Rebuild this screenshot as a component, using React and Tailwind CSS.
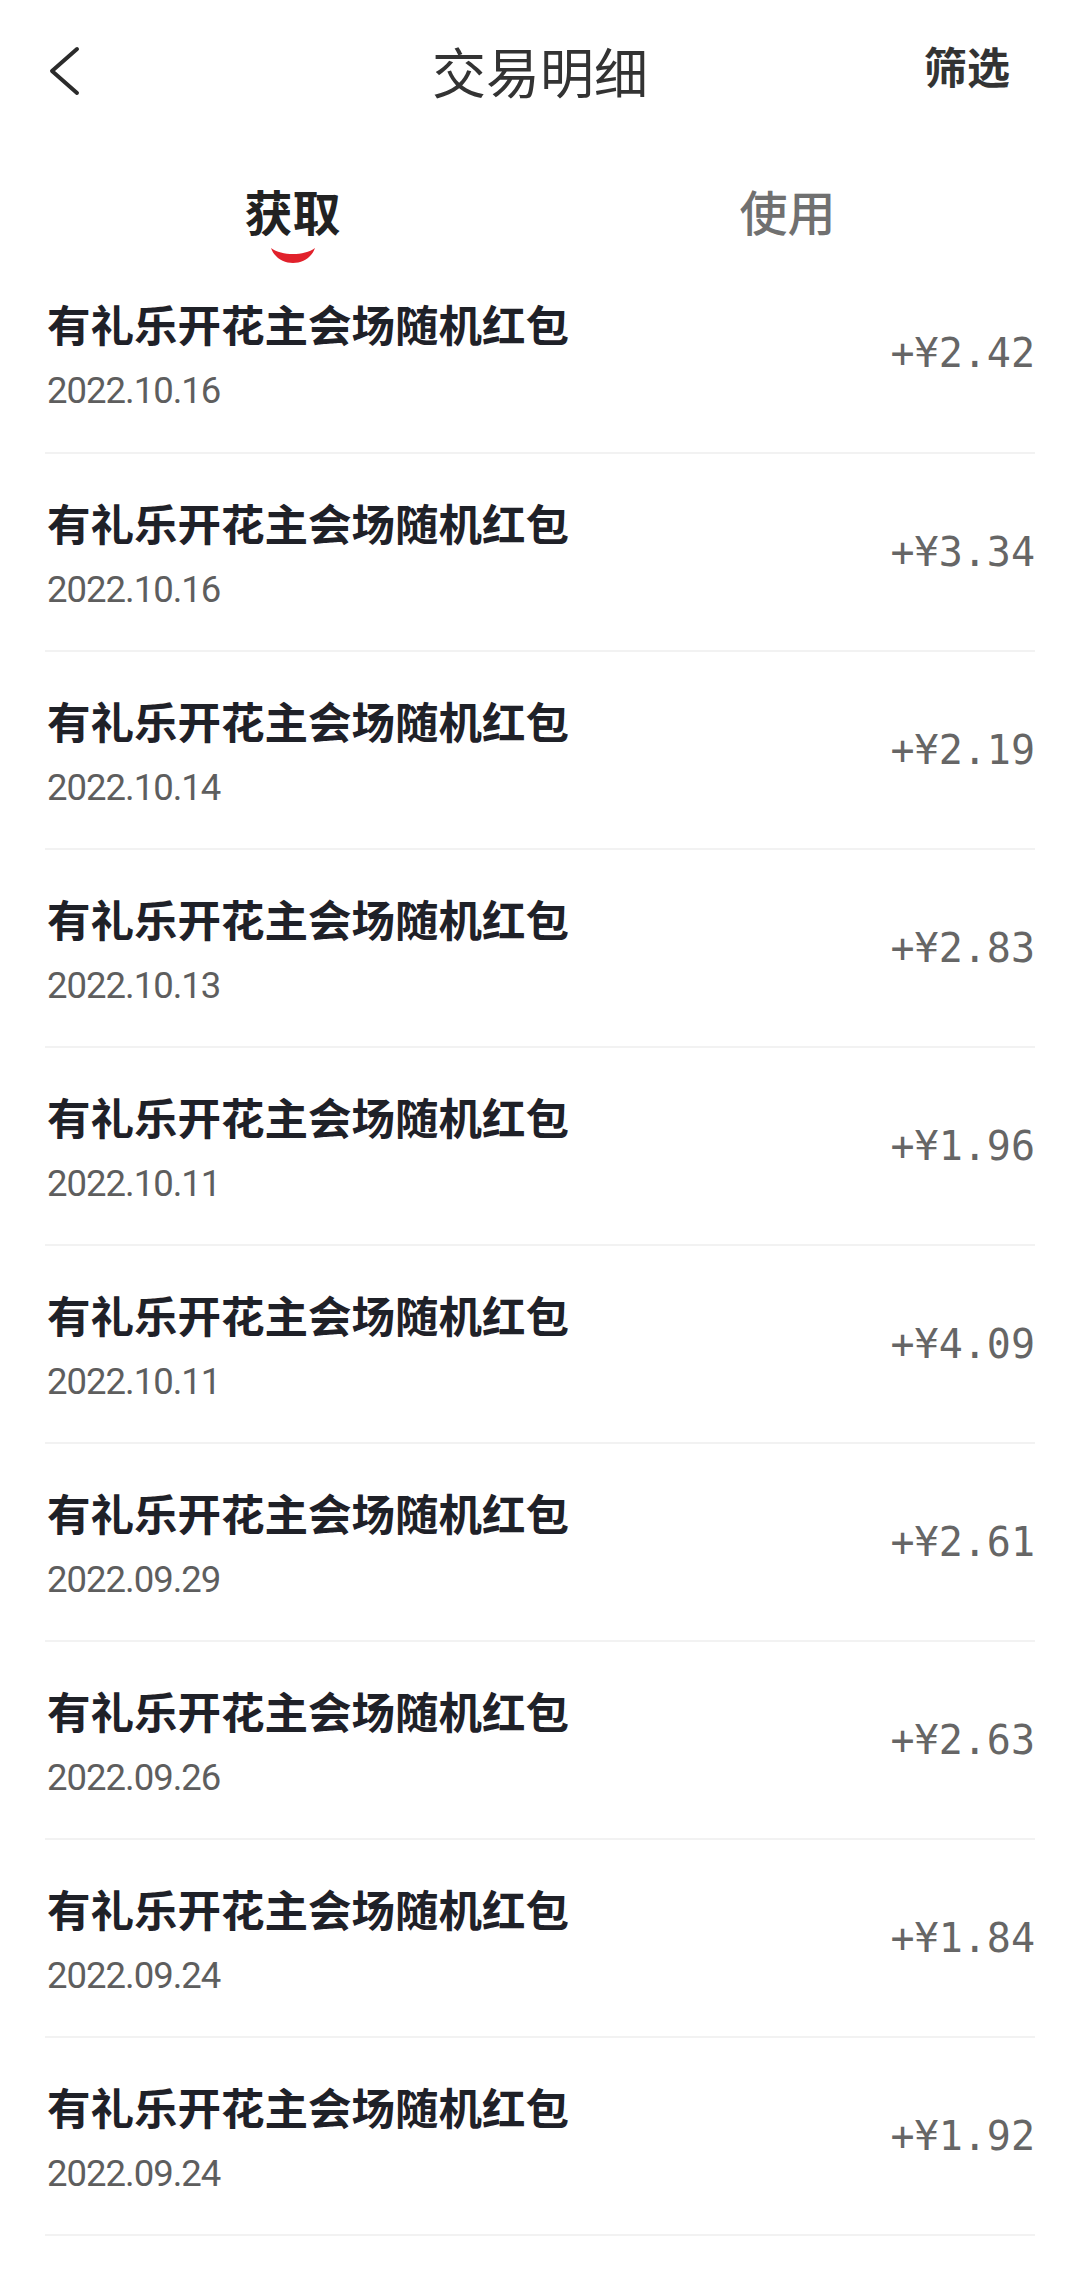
import { useState } from "react";

const records = [
  { date: "2022.10.16", amount: "+¥2.42" },
  { date: "2022.10.16", amount: "+¥3.34" },
  { date: "2022.10.14", amount: "+¥2.19" },
  { date: "2022.10.13", amount: "+¥2.83" },
  { date: "2022.10.11", amount: "+¥1.96" },
  { date: "2022.10.11", amount: "+¥4.09" },
  { date: "2022.09.29", amount: "+¥2.61" },
  { date: "2022.09.26", amount: "+¥2.63" },
  { date: "2022.09.24", amount: "+¥1.84" },
  { date: "2022.09.24", amount: "+¥1.92" },
];

const cjk = { fontFamily: '"Noto Sans CJK SC", "Noto Sans", sans-serif' };

const Indicator = () => (
  <svg width="46" height="19" viewBox="0 0 46 19">
    <path d="M1 2 C8 22, 38 22, 45 2 C34 10, 12 10, 1 2 Z" fill="#e1212b" />
  </svg>
);

const App = () => {
  const [tab, setTab] = useState(0);

  return (
    <div className="w-[1080px] min-h-[2272px] bg-white" style={cjk}>
      {/* header */}
      <div className="h-[142px] grid grid-cols-[1fr_auto_1fr] items-center">
        <button className="justify-self-start pl-[46px]">
          <svg width="36" height="50" viewBox="0 0 36 50">
            <path d="M31 3 L6 25 L31 47" fill="none" stroke="#2b2b2b" strokeWidth="4" strokeLinecap="round" strokeLinejoin="round" />
          </svg>
        </button>
        <div className="text-[54px] leading-none text-[#333]">交易明细</div>
        <div className="justify-self-end pr-[70px] mb-[12px] text-[43px] leading-none font-bold text-[#333]">筛选</div>
      </div>

      {/* tabs */}
      <div className="grid grid-cols-2 px-[45px] pt-[40px]">
        {["获取", "使用"].map((t, i) => (
          <button key={t} onClick={() => setTab(i)} className="flex flex-col items-center">
            <span
              className={
                tab === i
                  ? "text-[48px] leading-[56px] font-bold text-[#222]"
                  : "text-[48px] leading-[56px] font-medium text-[#707070]"
              }
            >
              {t}
            </span>
            <span className="mt-[8px] h-[19px]">{tab === i && <Indicator />}</span>
          </button>
        ))}
      </div>

      {/* list */}
      <div className="px-[45px]">
        {records.map((r, i) => (
          <div key={i}>
            <div className={i === 0 ? "h-[187px] pb-[11px] flex items-center justify-between" : "h-[196px] flex items-center justify-between"}>
              <div className="flex flex-col pt-[5px] pl-[2px]">
                <div className="text-[43.5px] leading-[56px] font-bold text-[#1f2128]">有礼乐开花主会场随机红包</div>
                <div
                  className="mt-[15px] text-[36.5px] leading-[48px] tracking-[-1px] text-[#5e5e5e]"
                  style={{ fontFamily: 'Roboto, "Noto Sans", sans-serif' }}
                >
                  {r.date}
                </div>
              </div>
              <div
                className="text-[40px] leading-none text-[#666]"
                style={{ fontFamily: '"DejaVu Sans Mono", "Liberation Mono", monospace' }}
              >
                {r.amount}
              </div>
            </div>
            <div className="h-[2px] bg-[#f2f2f2]" />
          </div>
        ))}
      </div>
    </div>
  );
};

export default App;
